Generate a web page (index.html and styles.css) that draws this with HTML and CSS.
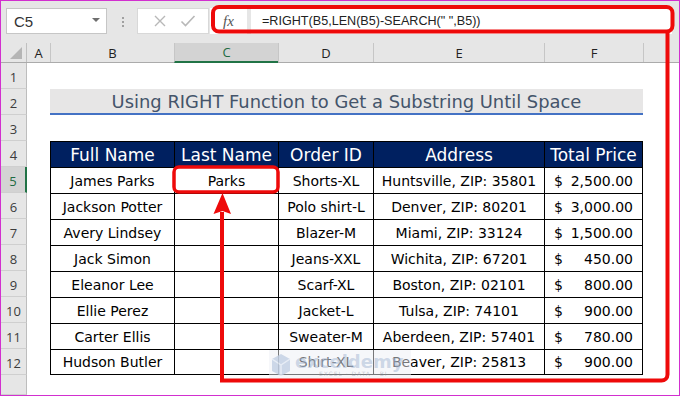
FILE: index.html
```html
<!DOCTYPE html>
<html>
<head>
<meta charset="utf-8">
<link rel="stylesheet" href="styles.css">
</head>
<body>
<div class="app">
  <div class="fbar">
    <div class="namebox"><span class="nb-text">C5</span><span class="caret"></span></div>
    <div class="dots"><i></i><i></i><i></i></div>
    <div class="btns">
      <svg width="14" height="14" viewBox="0 0 14 14"><path d="M2 2L12 12M12 2L2 12" stroke="#b8b8b8" stroke-width="1.4" fill="none"/></svg>
      <svg width="16" height="14" viewBox="0 0 16 14"><path d="M1.5 7.5L5.5 11.5L14.5 2" stroke="#b8b8b8" stroke-width="1.6" fill="none"/></svg>
    </div>
    <div class="fxbox"><span class="fx">fx</span></div>
    <div class="formula">=RIGHT(B5,LEN(B5)-SEARCH(" ",B5))</div>
  </div>

  <div class="sheet">
    <div class="colhead">
      <div class="corner"><svg width="12" height="12" viewBox="0 0 12 12"><path d="M12 0V12H0Z" fill="#b5b5b5"/></svg></div>
      <div class="ch">A</div>
      <div class="ch">B</div>
      <div class="ch sel">C</div>
      <div class="ch">D</div>
      <div class="ch">E</div>
      <div class="ch">F</div>
      <div class="ch"></div>
    </div>

    <div class="row"><div class="rh">1</div></div>
    <div class="row"><div class="rh">2</div><div class="cell"></div><div class="title">Using RIGHT Function to Get a Substring Until Space</div></div>
    <div class="row"><div class="rh">3</div></div>
    <div class="row"><div class="rh">4</div><div class="cell"></div>
      <div class="tc th">Full Name</div><div class="tc th">Last Name</div><div class="tc th">Order ID</div><div class="tc th">Address</div><div class="tc th last">Total Price</div>
    </div>
    <div class="row"><div class="rh sel">5</div><div class="cell"></div>
      <div class="tc">James Parks</div><div class="tc">Parks</div><div class="tc">Shorts-XL</div><div class="tc">Huntsville, ZIP: 35801</div><div class="tc last price"><span>$</span><span>2,500.00</span></div>
    </div>
    <div class="row"><div class="rh">6</div><div class="cell"></div>
      <div class="tc">Jackson Potter</div><div class="tc"></div><div class="tc">Polo shirt-L</div><div class="tc">Denver, ZIP: 80201</div><div class="tc last price"><span>$</span><span>3,000.00</span></div>
    </div>
    <div class="row"><div class="rh">7</div><div class="cell"></div>
      <div class="tc">Avery Lindsey</div><div class="tc"></div><div class="tc">Blazer-M</div><div class="tc">Miami, ZIP: 33124</div><div class="tc last price"><span>$</span><span>1,500.00</span></div>
    </div>
    <div class="row"><div class="rh">8</div><div class="cell"></div>
      <div class="tc">Jack Simon</div><div class="tc"></div><div class="tc">Jeans-XXL</div><div class="tc">Wichita, ZIP: 67201</div><div class="tc last price"><span>$</span><span>450.00</span></div>
    </div>
    <div class="row"><div class="rh">9</div><div class="cell"></div>
      <div class="tc">Eleanor Lee</div><div class="tc"></div><div class="tc">Scarf-XL</div><div class="tc">Boston, ZIP: 02101</div><div class="tc last price"><span>$</span><span>800.00</span></div>
    </div>
    <div class="row"><div class="rh">10</div><div class="cell"></div>
      <div class="tc">Ellie Perez</div><div class="tc"></div><div class="tc">Jacket-L</div><div class="tc">Tulsa, ZIP: 74101</div><div class="tc last price"><span>$</span><span>900.00</span></div>
    </div>
    <div class="row"><div class="rh">11</div><div class="cell"></div>
      <div class="tc">Carter Ellis</div><div class="tc"></div><div class="tc">Sweater-M</div><div class="tc">Aberdeen, ZIP: 57401</div><div class="tc last price"><span>$</span><span>780.00</span></div>
    </div>
    <div class="row lastrow"><div class="rh">12</div><div class="cell"></div>
      <div class="tc">Hudson Butler</div><div class="tc"></div><div class="tc">Shirt-XL</div><div class="tc">Beaver, ZIP: 25813</div><div class="tc last price"><span>$</span><span>900.00</span></div>
    </div>
    <div class="row short"><div class="rh"></div></div>
  </div>

  <div class="watermark">
    <svg width="20" height="24" viewBox="0 0 20 24"><path d="M10 1L19 6V18L10 23L1 18V6Z" fill="#c7d3e6"/><path d="M10 12L19 6M10 12L1 6M10 12V23" stroke="#e6ecf5" stroke-width="1.5" fill="none"/></svg>
    <div class="wm-text"><span class="wm-big">exceldemy</span><span class="wm-small">EXCEL · DATA · BI</span></div>
  </div>

  <svg class="annot" width="680" height="396" viewBox="0 0 680 396">
    <rect x="213" y="7" width="459.5" height="24.5" rx="6" fill="none" stroke="#ee0a0a" stroke-width="4"/>
    <path d="M667.5 33V374.5A6 6 0 0 1 661.5 380.5H222V212" fill="none" stroke="#ee0a0a" stroke-width="4"/>
    <path d="M222.5 193L213.5 214L222.5 211L231 214Z" fill="#ee0a0a"/>
    <rect x="174" y="167" width="104" height="25" rx="5" fill="none" stroke="#ee0a0a" stroke-width="3.5"/>
  </svg>
</div>
</body>
</html>
```

FILE: styles.css
```css
* { box-sizing: border-box; }
html, body { margin: 0; padding: 0; }
body { width: 680px; height: 396px; overflow: hidden; background: #fff; }

.app {
  position: relative;
  width: 680px;
  height: 396px;
  border: 1px solid #d22fcf;
  background: #e6e6e6;
  display: flex;
  flex-direction: column;
  font-family: "Open Sans", "Liberation Sans", sans-serif;
}

/* formula bar */
.fbar {
  height: 42px;
  flex: none;
  display: flex;
  align-items: flex-start;
  padding: 7px 7px 0 5px;
}
.namebox {
  width: 101px;
  height: 26px;
  background: #fff;
  border: 1px solid #c6c6c6;
  display: flex;
  align-items: center;
  justify-content: space-between;
  padding: 0 6px 0 7px;
}
.nb-text { font-family: "Liberation Sans", sans-serif; font-size: 15px; color: #333; }
.caret {
  width: 0; height: 0;
  border-left: 4px solid transparent;
  border-right: 4px solid transparent;
  border-top: 4px solid #6e6e6e;
  margin-top: -2px;
}
.dots {
  width: 3px;
  margin-left: 15px;
  margin-top: 9px;
  display: flex;
  flex-direction: column;
  gap: 2px;
}
.dots i { display: block; width: 2px; height: 2px; background: #a0a0a0; }
.btns {
  width: 72px;
  height: 26px;
  margin-left: 12px;
  background: #fff;
  border: 1px solid #d8d8d8;
  display: flex;
  align-items: center;
  justify-content: space-around;
  padding: 0 6px 0 8px;
}
.fxbox {
  width: 37px;
  height: 26px;
  margin-left: 1px;
  background: #fff;
  display: flex;
  align-items: center;
  justify-content: center;
}
.fx {
  font-family: "Liberation Serif", serif;
  font-style: italic;
  font-size: 15px;
  color: #555;
}
.formula {
  flex: 1;
  height: 26px;
  margin-left: 4px;
  background: #fff;
  display: flex;
  align-items: center;
  padding-left: 11px;
  font-family: "Liberation Sans", sans-serif;
  font-size: 12.6px;
  color: #222;
  white-space: pre;
}

/* sheet */
.sheet {
  flex: 1;
  display: flex;
  flex-direction: column;
  background: #fff;
}
.colhead, .row {
  display: grid;
  grid-template-columns: 26px 23px 124px 104px 95px 171px 99px 1fr;
}
.colhead {
  height: 20px;
  background: #e6e6e6;
  border-bottom: 1px solid #ababab;
}
.corner {
  border-right: 1px solid #c0c0c0;
  display: flex;
  align-items: flex-end;
  justify-content: flex-end;
  padding: 0 4px 3px 0;
}
.ch {
  display: flex;
  align-items: center;
  justify-content: center;
  font-family: "Open Sans", sans-serif;
  font-size: 13px;
  color: #222;
  border-left: 1px solid #c6c6c6;
}
.ch:nth-child(2) { border-left: none; }
.ch.sel {
  background: #d3d3d3;
  border-bottom: 2px solid #217346;
  color: #1e6b42;
  margin-bottom: -1px;
}

.row { height: 26px; }
.row.short { height: 20px; }
.rh {
  background: #e6e6e6;
  border-right: 1px solid #bdbdbd;
  border-bottom: 1px solid #cfcfcf;
  display: flex;
  align-items: center;
  justify-content: center;
  font-family: "Open Sans", sans-serif;
  font-size: 13px;
  color: #3c3c3c;
  padding-top: 2px;
}
.rh.sel {
  background: #d3d3d3;
  border-right: 2px solid #217346;
  color: #1e6b42;
}

.title {
  grid-column: 3 / 8;
  background: #e7e6e6;
  border-bottom: 2px solid #4472c4;
  display: flex;
  align-items: center;
  justify-content: center;
  font-family: "DejaVu Sans", sans-serif;
  font-size: 17.9px;
  color: #44546a;
}

.tc {
  border-left: 1px solid #000;
  border-top: 1px solid #000;
  display: flex;
  align-items: center;
  justify-content: center;
  font-family: "DejaVu Sans", sans-serif;
  font-size: 14px;
  color: #000;
  white-space: nowrap;
}
.tc.last { border-right: 1px solid #000; }
.lastrow .tc { border-bottom: 1px solid #000; }
.tc.th {
  background: #002060;
  color: #fff;
  font-size: 17px;
}
.tc.price {
  justify-content: space-between;
  padding: 0 9px 0 9px;
}

/* overlays */
.watermark {
  position: absolute;
  left: 268px;
  top: 349px;
  width: 142px;
  height: 30px;
  display: flex;
  align-items: center;
  gap: 4px;
  padding-left: 2px;
  background: rgba(238, 240, 245, 0.55);
  opacity: 0.9;
}
.wm-text { display: flex; flex-direction: column; line-height: 1; }
.wm-big {
  font-family: "DejaVu Sans", sans-serif;
  font-weight: bold;
  font-size: 18px;
  color: rgba(160, 180, 210, 0.55);
}
.wm-small {
  font-family: "DejaVu Sans", sans-serif;
  font-size: 6px;
  letter-spacing: 1px;
  color: rgba(150, 160, 175, 0.6);
  margin-left: 24px;
}
.annot {
  position: absolute;
  left: -1px;
  top: -1px;
  pointer-events: none;
}
```
